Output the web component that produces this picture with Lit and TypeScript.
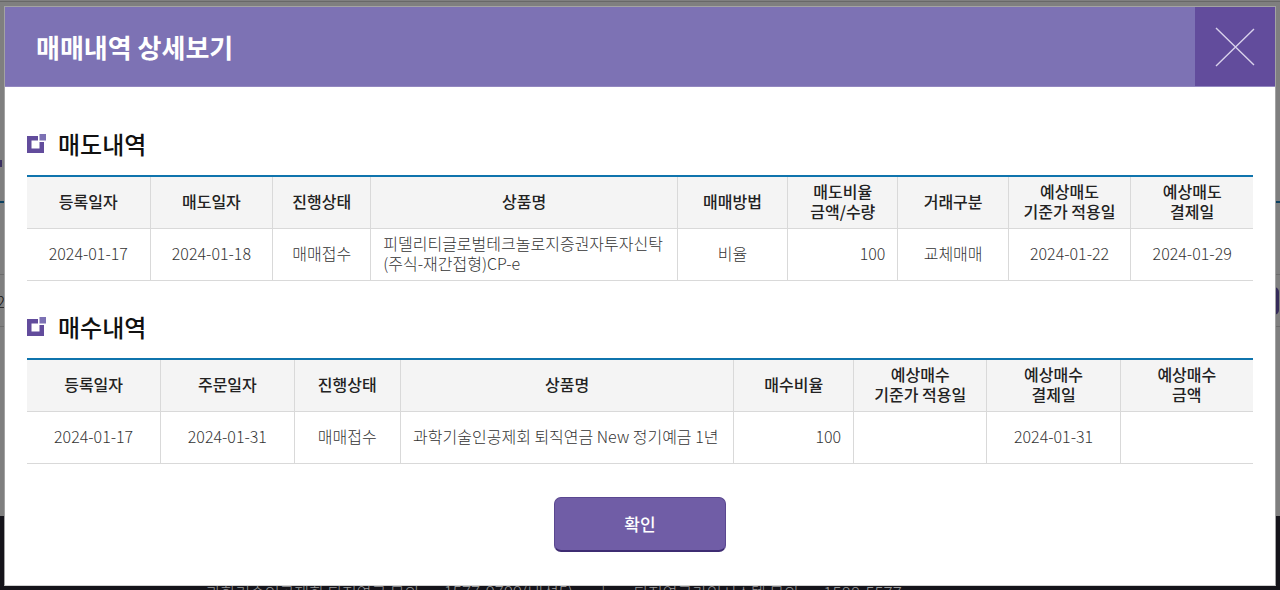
import { LitElement, html, css } from "lit";
import { customElement, property } from "lit/decorators.js";

interface Column {
  label: string[];
  weight: number;
  align?: "left" | "right";
}

const sellColumns: Column[] = [
  { label: ["등록일자"], weight: 10 },
  { label: ["매도일자"], weight: 10 },
  { label: ["진행상태"], weight: 8 },
  { label: ["상품명"], weight: 25, align: "left" },
  { label: ["매매방법"], weight: 9 },
  { label: ["매도비율", "금액/수량"], weight: 9, align: "right" },
  { label: ["거래구분"], weight: 9 },
  { label: ["예상매도", "기준가 적용일"], weight: 10 },
  { label: ["예상매도", "결제일"], weight: 10 },
];

const sellRows: string[][] = [
  [
    "2024-01-17",
    "2024-01-18",
    "매매접수",
    "피델리티글로벌테크놀로지증권자투자신탁(주식-재간접형)CP-e",
    "비율",
    "100",
    "교체매매",
    "2024-01-22",
    "2024-01-29",
  ],
];

const buyColumns: Column[] = [
  { label: ["등록일자"], weight: 10 },
  { label: ["주문일자"], weight: 10 },
  { label: ["진행상태"], weight: 8 },
  { label: ["상품명"], weight: 25, align: "left" },
  { label: ["매수비율"], weight: 9, align: "right" },
  { label: ["예상매수", "기준가 적용일"], weight: 10 },
  { label: ["예상매수", "결제일"], weight: 10 },
  { label: ["예상매수", "금액"], weight: 10 },
];

const buyRows: string[][] = [
  ["2024-01-17", "2024-01-31", "매매접수", "과학기술인공제회 퇴직연금 New 정기예금 1년", "100", "", "2024-01-31", ""],
];

@customElement("trade-section")
export class TradeSection extends LitElement {
  @property() heading = "";
  @property({ attribute: false }) columns: Column[] = [];
  @property({ attribute: false }) rows: string[][] = [];

  static styles = css`
    :host {
      display: block;
    }
    .heading {
      display: flex;
      align-items: center;
      gap: 12px;
      margin: 0 0 15px;
      font-size: 24px;
      line-height: 32px;
      font-weight: 500;
      color: #111;
    }
    .marker {
      display: block;
      width: 19px;
      height: 19px;
      margin-bottom: 2px;
    }
    .table {
      width: 100%;
      table-layout: fixed;
      border-collapse: separate;
      border-spacing: 0;
      border-top: 2px solid #0f74ad;
      font-size: 16px;
      line-height: 20px;
    }
    .head,
    .cell {
      box-sizing: border-box;
      height: 52px;
      padding: 0 12px 3px;
      border-left: 1px solid #d9d9d9;
      border-bottom: 1px solid #d9d9d9;
      text-align: center;
      vertical-align: middle;
    }
    .head {
      padding: 0 0 3px;
      background: #f4f4f4;
      color: #222;
      font-weight: 500;
    }
    .head:first-child,
    .cell:first-child {
      border-left: 0;
    }
    .cell {
      color: #333;
      font-weight: 300;
      overflow-wrap: anywhere;
    }
    .left {
      text-align: left;
    }
    .right {
      text-align: right;
    }
  `;

  render() {
    const total = this.columns.reduce((sum, c) => sum + c.weight, 0);
    return html`
      <h2 class="heading" id="heading">
        <svg class="marker" viewBox="0 0 19 19" aria-hidden="true">
          <path d="M0 2H11V6.5H4.5V14.5H12.5V8H17V19H0Z" fill="#624c9c" />
          <rect x="12.5" y="0" width="6.5" height="6.5" fill="#7c71b4" />
        </svg>
        ${this.heading}
      </h2>
      <table class="table" aria-labelledby="heading">
        <colgroup>
          ${this.columns.map((c) => html`<col style="width:${(c.weight / total) * 100}%" />`)}
        </colgroup>
        <thead>
          <tr>
            ${this.columns.map(
              (c) => html`<th class="head" scope="col">${c.label.map((line, i) => (i ? html`<br />${line}` : line))}</th>`
            )}
          </tr>
        </thead>
        <tbody>
          ${this.rows.map(
            (row) => html`<tr>
              ${row.map((value, i) => html`<td class="cell ${this.columns[i].align ?? ""}">${value}</td>`)}
            </tr>`
          )}
        </tbody>
      </table>
    `;
  }
}

@customElement("app-root")
export class AppRoot extends LitElement {
  static styles = css`
    :host {
      display: block;
      position: relative;
      min-height: 100vh;
      overflow: hidden;
      font-family: "Noto Sans CJK KR", "Noto Sans", sans-serif;
    }
    .page {
      position: absolute;
      inset: 0;
      display: flex;
      flex-direction: column;
      overflow: hidden;
      background: #7f7f7f;
    }
    .topline {
      height: 1px;
      border-bottom: 1px solid #686868;
    }
    .content {
      flex: 1;
      display: flex;
      flex-direction: column;
    }
    .stub {
      width: 2px;
      height: 7px;
      margin-top: 158px;
      background: #3a2f60;
    }
    .rule {
      height: 2px;
      margin-top: 34px;
      background: #0b4060;
    }
    .band {
      display: flex;
      align-items: center;
      justify-content: space-between;
      height: 51px;
      margin-top: 71px;
      border-top: 1px solid #6c6c6c;
      border-bottom: 1px solid #6c6c6c;
      font-size: 16px;
      font-weight: 300;
      color: #111;
    }
    .date {
      display: flex;
      justify-content: flex-end;
      width: 5px;
    }
    .pill {
      width: 20px;
      height: 28px;
      margin-right: 1px;
      border-radius: 5px;
      background: #352b59;
    }
    .footer {
      display: flex;
      gap: 28px;
      box-sizing: border-box;
      height: 74px;
      padding: 66px 0 0 206px;
      background: #15141a;
      color: #999;
      font-size: 16px;
      line-height: 20px;
      font-weight: 300;
      white-space: nowrap;
    }
    .contact {
      display: flex;
      gap: 8px;
    }
    .phone {
      font-size: 17px;
    }
    .dialog {
      position: relative;
      margin: 6px 4px 3px;
      border: 1px solid #a3a3a3;
      border-bottom-color: #d0d0d0;
      background: #fff;
    }
    .bar {
      display: flex;
      align-items: center;
      justify-content: space-between;
      height: 79px;
      border-bottom: 1px solid #9388c0;
      background: #7d72b4;
    }
    .title {
      margin: 0;
      padding-left: 31px;
      font-size: 26px;
      line-height: 40px;
      font-weight: 700;
      color: #fff;
    }
    .close {
      display: flex;
      align-items: center;
      justify-content: center;
      width: 80px;
      height: 79px;
      padding: 0;
      border: 0;
      background: #624c9c;
      cursor: pointer;
    }
    .cross {
      width: 40px;
      height: 40px;
    }
    .body {
      display: flex;
      flex-direction: column;
      gap: 30px;
      padding: 41px 22px 33px;
    }
    .actions {
      display: flex;
      justify-content: center;
      padding-top: 3px;
    }
    .confirm {
      width: 172px;
      height: 55px;
      padding: 0 0 1px;
      border: 1px solid #5a4790;
      border-bottom: 2px solid #3e2c72;
      border-radius: 7px;
      background: #705da6;
      color: #fff;
      font-family: inherit;
      font-size: 17px;
      font-weight: 500;
      cursor: pointer;
    }
  `;

  render() {
    return html`
      <div class="page" aria-hidden="true">
        <div class="topline"></div>
        <div class="content">
          <div class="stub"></div>
          <div class="rule"></div>
          <div class="band"><span class="date">2</span><span class="pill"></span></div>
        </div>
        <div class="footer">
          <span class="contact"><span>과학기술인공제회 퇴직연금 문의</span><span>=</span><span class="phone">1577-9799(내선5)</span></span>
          <span>|</span>
          <span class="contact"><span>퇴직연금가입시스템 문의</span><span>=</span><span class="phone">1588-5577</span></span>
        </div>
      </div>
      <div class="dialog" role="dialog" aria-modal="true" aria-labelledby="title">
        <header class="bar">
          <h1 class="title" id="title">매매내역 상세보기</h1>
          <button class="close" type="button" aria-label="닫기">
            <svg class="cross" viewBox="0 0 40 40" aria-hidden="true">
              <path d="M1 1L39 38M39 2L1 39" fill="none" stroke="#d9d2ec" stroke-width="1.4" />
            </svg>
          </button>
        </header>
        <div class="body">
          <trade-section heading="매도내역" .columns=${sellColumns} .rows=${sellRows}></trade-section>
          <trade-section heading="매수내역" .columns=${buyColumns} .rows=${buyRows}></trade-section>
          <div class="actions"><button class="confirm" type="button">확인</button></div>
        </div>
      </div>
    `;
  }
}
